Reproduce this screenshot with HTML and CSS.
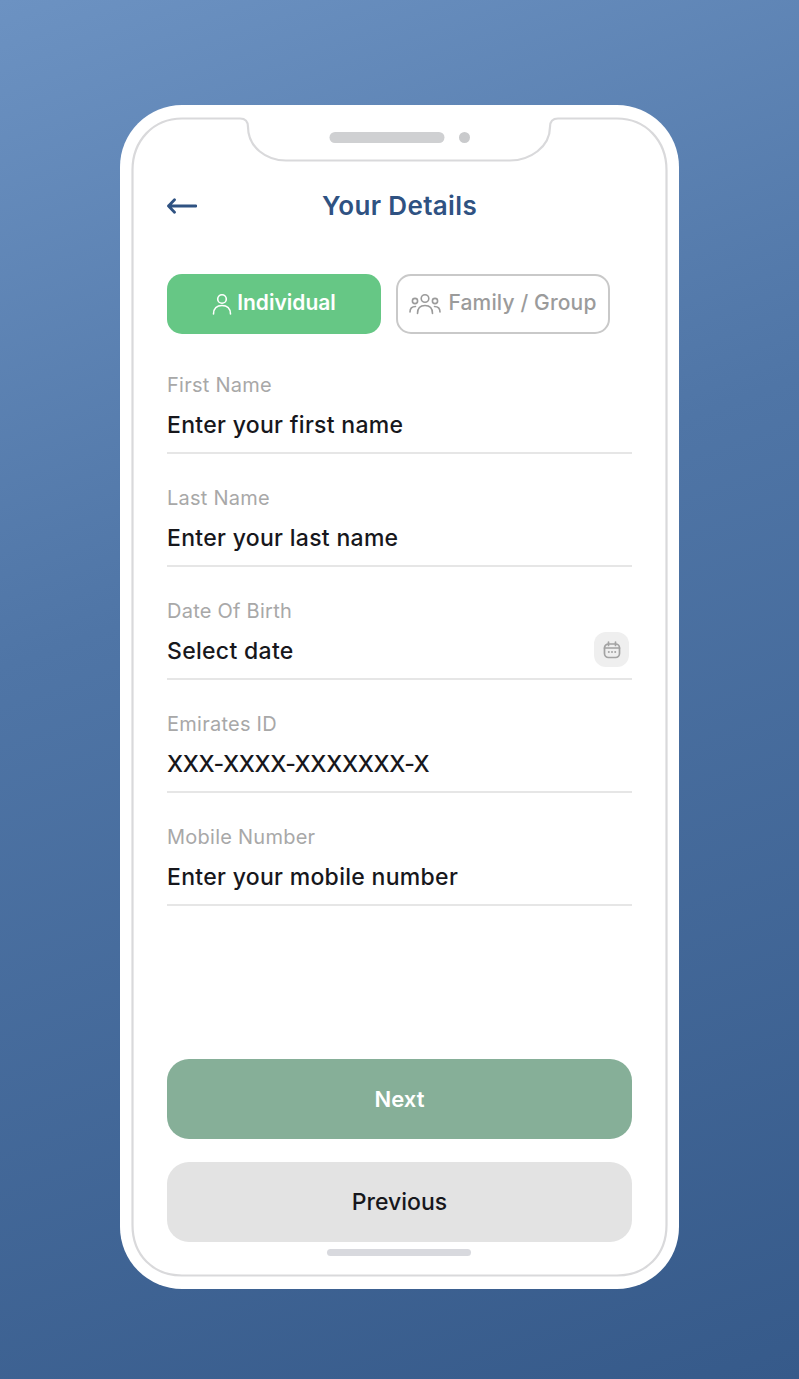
FILE: index.html
```html
<!DOCTYPE html>
<html lang="en">
<head>
<meta charset="utf-8">
<title>Your Details</title>
<link rel="stylesheet" href="styles.css">
</head>
<body>
<main class="phone">
  <svg class="frame" viewBox="0 0 559 1184" width="559" height="1184" aria-hidden="true">
    <path d="M62 13.5H120Q128 13.5 128 22C128 42 146 55.5 166 55.5H390C410 55.5 430 42 430 22Q430 13.5 438 13.5H497C526 13.5 546.5 36 546.5 65V1120C546.5 1150 526 1170.5 497 1170.5H62C33 1170.5 12.5 1150 12.5 1120V65C12.5 36 33 13.5 62 13.5Z" fill="none" stroke="#d9d9db" stroke-width="2.2"/>
    <rect x="209.500" y="27" width="115" height="11" rx="5.500" fill="#cfd0d2"/>
    <circle cx="344.500" cy="32.500" r="5.500" fill="#c9cacc"/>
  </svg>
  <div class="content">
    <header class="header">
      <svg class="back" viewBox="0 0 30 16" width="30" height="16" aria-hidden="true"><path d="M29 8H1.500M7.500 1.800L1.500 8L7.500 14.200" fill="none" stroke="#2f5282" stroke-width="2.800" stroke-linecap="round" stroke-linejoin="round"/></svg>
      <h1 class="title">Your Details</h1>
    </header>
    <div class="tabs">
      <div class="tab tab-active">
        <svg viewBox="0 0 20 22" width="20" height="22" aria-hidden="true"><circle cx="10" cy="6" r="4.300" fill="none" stroke="#fff" stroke-width="1.600"/><path d="M1.500 21C1.500 15.500 5 12.500 10 12.500S18.500 15.500 18.500 21" fill="none" stroke="#fff" stroke-width="1.600" stroke-linecap="round"/></svg>
        <span>Individual</span>
      </div>
      <div class="tab tab-idle">
        <svg viewBox="0 0 32 22" width="32" height="22" aria-hidden="true"><g fill="none" stroke="#9b9b9b" stroke-width="1.600" stroke-linecap="round"><circle cx="16" cy="5.500" r="3.800"/><circle cx="6" cy="8" r="2.600"/><circle cx="26" cy="8" r="2.600"/><path d="M8.500 20.500C8.500 15 11.500 12.500 16 12.500S23.500 15 23.500 20.500"/><path d="M1 19C1 15.500 3 13.500 6.500 13.500"/><path d="M31 19C31 15.500 29 13.500 25.500 13.500"/></g></svg>
        <span>Family / Group</span>
      </div>
    </div>
    <div class="fields">
      <div class="field"><div class="label">First Name</div><div class="value">Enter your first name</div></div>
      <div class="field"><div class="label">Last Name</div><div class="value">Enter your last name</div></div>
      <div class="field"><div class="label">Date Of Birth</div><div class="value">Select date</div>
        <span class="cal"><svg viewBox="0 0 18 18" width="18" height="18" aria-hidden="true"><g fill="none" stroke="#a3a3a3" stroke-width="1.700" stroke-linecap="round"><rect x="1.500" y="3" width="15" height="13.500" rx="4"/><path d="M5.500 1V4.500M12.500 1V4.500M1.500 7H16.500"/></g><g fill="#a3a3a3"><circle cx="5.800" cy="11" r="1"/><circle cx="9" cy="11" r="1"/><circle cx="12.200" cy="11" r="1"/></g></svg></span>
      </div>
      <div class="field"><div class="label">Emirates ID</div><div class="value value-id">XXX-XXXX-XXXXXXX-X</div></div>
      <div class="field"><div class="label">Mobile Number</div><div class="value">Enter your mobile number</div></div>
    </div>
    <div class="actions">
      <div class="btn btn-next">Next</div>
      <div class="btn btn-prev">Previous</div>
    </div>
    <div class="home"></div>
  </div>
</main>
</body>
</html>
```
FILE: styles.css
```css
* { box-sizing: border-box; }
html, body { margin: 0; height: 100%; }
body {
  width: 799px;
  height: 1379px;
  padding: 105px 120px 90px;
  background: linear-gradient(160deg, #6c92c2 0%, #4f75a6 40%, #365a8a 100%);
  font-family: Inter, "Liberation Sans", sans-serif;
  overflow: hidden;
}
.phone {
  position: relative;
  width: 559px;
  height: 1184px;
  background: #fff;
  border-radius: 62px;
}
.frame { position: absolute; left: 0; top: 0; }
.content {
  position: relative;
  height: 100%;
  padding: 85px 47px 0;
  display: flex;
  flex-direction: column;
}
.header {
  position: relative;
  height: 30px;
  display: flex;
  align-items: center;
  justify-content: center;
}
.back { position: absolute; left: 0; top: 8px; }
.title { margin: 0; font-size: 26px; font-weight: 600; color: #2f5282; letter-spacing: 0.35px; }
.tabs { display: flex; gap: 15px; margin-top: 54px; }
.tab {
  width: 214px;
  height: 60px;
  border-radius: 15px;
  display: flex;
  align-items: center;
  justify-content: center;
  gap: 5px;
  font-size: 21px;
}
.tab span { position: relative; top: -2px; }
.tab-active { background: #66c785; color: #fff; font-weight: 600; }
.tab-idle { border: 2px solid #c9c9c9; color: #9b9b9b; gap: 7px; font-weight: 500; letter-spacing: 0.15px; }
.fields { margin-top: 37px; width: 465px; }
.field {
  position: relative;
  height: 83px;
  margin-bottom: 30px;
  padding-top: 1px;
  border-bottom: 2px solid #e6e6e6;
}
.label { font-size: 20px; line-height: 26px; color: #a8a8a8; letter-spacing: 0.25px; }
.value { margin-top: 13px; font-size: 23px; line-height: 28px; font-weight: 500; color: #17171c; letter-spacing: 0.3px; }
.value-id { letter-spacing: -0.35px; }
.cal {
  position: absolute;
  right: 3px;
  top: 35px;
  width: 35px;
  height: 35px;
  border-radius: 12px;
  background: #efefef;
  display: flex;
  align-items: center;
  justify-content: center;
}
.actions { display: flex; flex-direction: column; gap: 23px; margin-top: 123px; }
.btn {
  height: 80px;
  border-radius: 22px;
  display: flex;
  align-items: center;
  justify-content: center;
  font-size: 22px;
  font-weight: 500;
}
.btn-next { background: #86af98; color: #fff; font-weight: 600; }
.btn-prev { background: #e3e3e3; color: #17171c; font-size: 23px; }
.home {
  width: 144px;
  height: 7px;
  margin: 7px 0 0 160px;
  border-radius: 4px;
  background: #d8d9de;
}
```
